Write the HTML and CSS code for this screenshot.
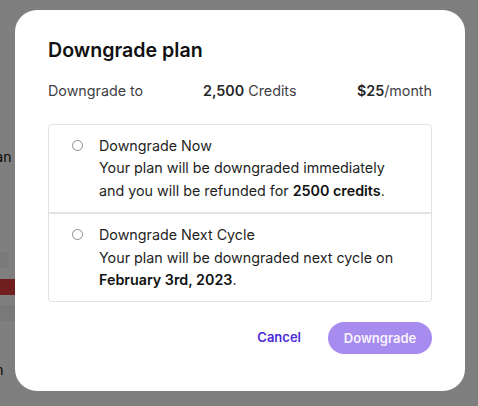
FILE: index.html
```html
<!DOCTYPE html>
<html lang="en">
  <head>
    <meta charset="UTF-8" />
    <meta name="viewport" content="width=device-width, initial-scale=1.0" />
    <title>Downgrade plan</title>
    <link rel="stylesheet" href="styles.css">
  </head>
  <body>
    <!-- page behind the overlay -->
    <div class="page">
      <p class="page-text first">Plan</p>
      <div class="page-pill"></div>
      <div class="page-danger"></div>
      <div class="page-band"></div>
      <p class="page-text last">Your plan</p>
    </div>

    <div class="overlay">
      <div class="modal">
        <h1>Downgrade plan</h1>

        <div class="summary">
          <span>Downgrade to</span>
          <span><b>2,500</b> Credits</span>
          <span><b>$25</b>/month</span>
        </div>

        <div class="options">
          <label class="option">
            <span class="radio"></span>
            <span class="option-text">
              Downgrade Now<br>
              Your plan will be downgraded immediately and you will be refunded for <b>2500 credits</b>.
            </span>
          </label>
          <label class="option">
            <span class="radio"></span>
            <span class="option-text">
              Downgrade Next Cycle<br>
              Your plan will be downgraded next cycle on <b>February 3rd, 2023</b>.
            </span>
          </label>
        </div>

        <div class="actions">
          <button class="cancel">Cancel</button>
          <button class="confirm">Downgrade</button>
        </div>
      </div>
    </div>
  </body>
</html>
```

FILE: styles.css
```css
* {
  margin: 0;
  padding: 0;
  box-sizing: border-box;
}

body {
  font-family: Inter, "Noto Sans", sans-serif;
  background-color: #fff;
  color: #1f1f1f;
  width: 478px;
  height: 406px;
  overflow: hidden;
  position: relative;
}

/* Background page */
.page {
  display: flex;
  flex-direction: column;
  padding-top: 148px;
  margin-left: -17px;
}

.page-text {
  font-size: 14px;
  color: #111;
}

.page-pill {
  margin-top: 87px;
  width: 25px;
  height: 16px;
  border-radius: 4px;
  background-color: #f2f2f2;
}

.page-danger {
  margin-top: 11px;
  width: 60px;
  height: 16px;
  background-color: #e03c3c;
}

.page-band {
  margin-top: 10px;
  width: 60px;
  height: 16px;
  background-color: #f2f2f2;
}

.page-text.last {
  margin-top: 40px;
  margin-left: -42px;
}

/* Overlay + modal */
.overlay {
  position: absolute;
  top: 0;
  left: 0;
  width: 100%;
  height: 100%;
  background-color: rgba(0, 0, 0, 0.5);
  display: flex;
  justify-content: center;
  padding-top: 10px;
}

.modal {
  width: 450px;
  height: 381px;
  margin-left: 2px;
  background-color: #fff;
  border-radius: 22px;
  padding: 28px 33px 0 33px;
}

h1 {
  font-size: 19.6px;
  line-height: 24px;
  font-weight: 600;
  color: #111;
}

.summary {
  margin-top: 19px;
  display: grid;
  grid-template-columns: 155px 1fr auto;
  font-size: 14.3px;
  line-height: 20px;
  color: #3f3f46;
}

.summary b {
  font-weight: 600;
  color: #27272a;
}

.options {
  margin-top: 23px;
  border: 1px solid #e2e2e4;
  border-radius: 4px;
}

.option {
  display: flex;
  padding: 10px 28px 10px 23px;
  cursor: pointer;
}

.option + .option {
  border-top: 2px solid #e4e4e6;
}

.radio {
  flex: none;
  width: 11px;
  height: 11px;
  margin-top: 5px;
  border: 1px solid #8a8a8a;
  border-radius: 50%;
  margin-right: 16px;
}

.option-text {
  font-size: 14.3px;
  line-height: 22.4px;
  color: #1f1f1f;
}

.option-text b {
  font-weight: 600;
  color: #111;
}

.actions {
  margin-top: 20px;
  display: flex;
  justify-content: flex-end;
  align-items: center;
  gap: 27px;
}

button {
  font-family: inherit;
  border: none;
  background: none;
  cursor: pointer;
  font-size: 13px;
  font-weight: 600;
}

.cancel {
  color: #4c2bd8;
  margin-top: -2px;
}

.confirm {
  height: 32px;
  width: 104px;
  border-radius: 16px;
  background-color: #a78bee;
  color: #f7f4ff;
}
```
